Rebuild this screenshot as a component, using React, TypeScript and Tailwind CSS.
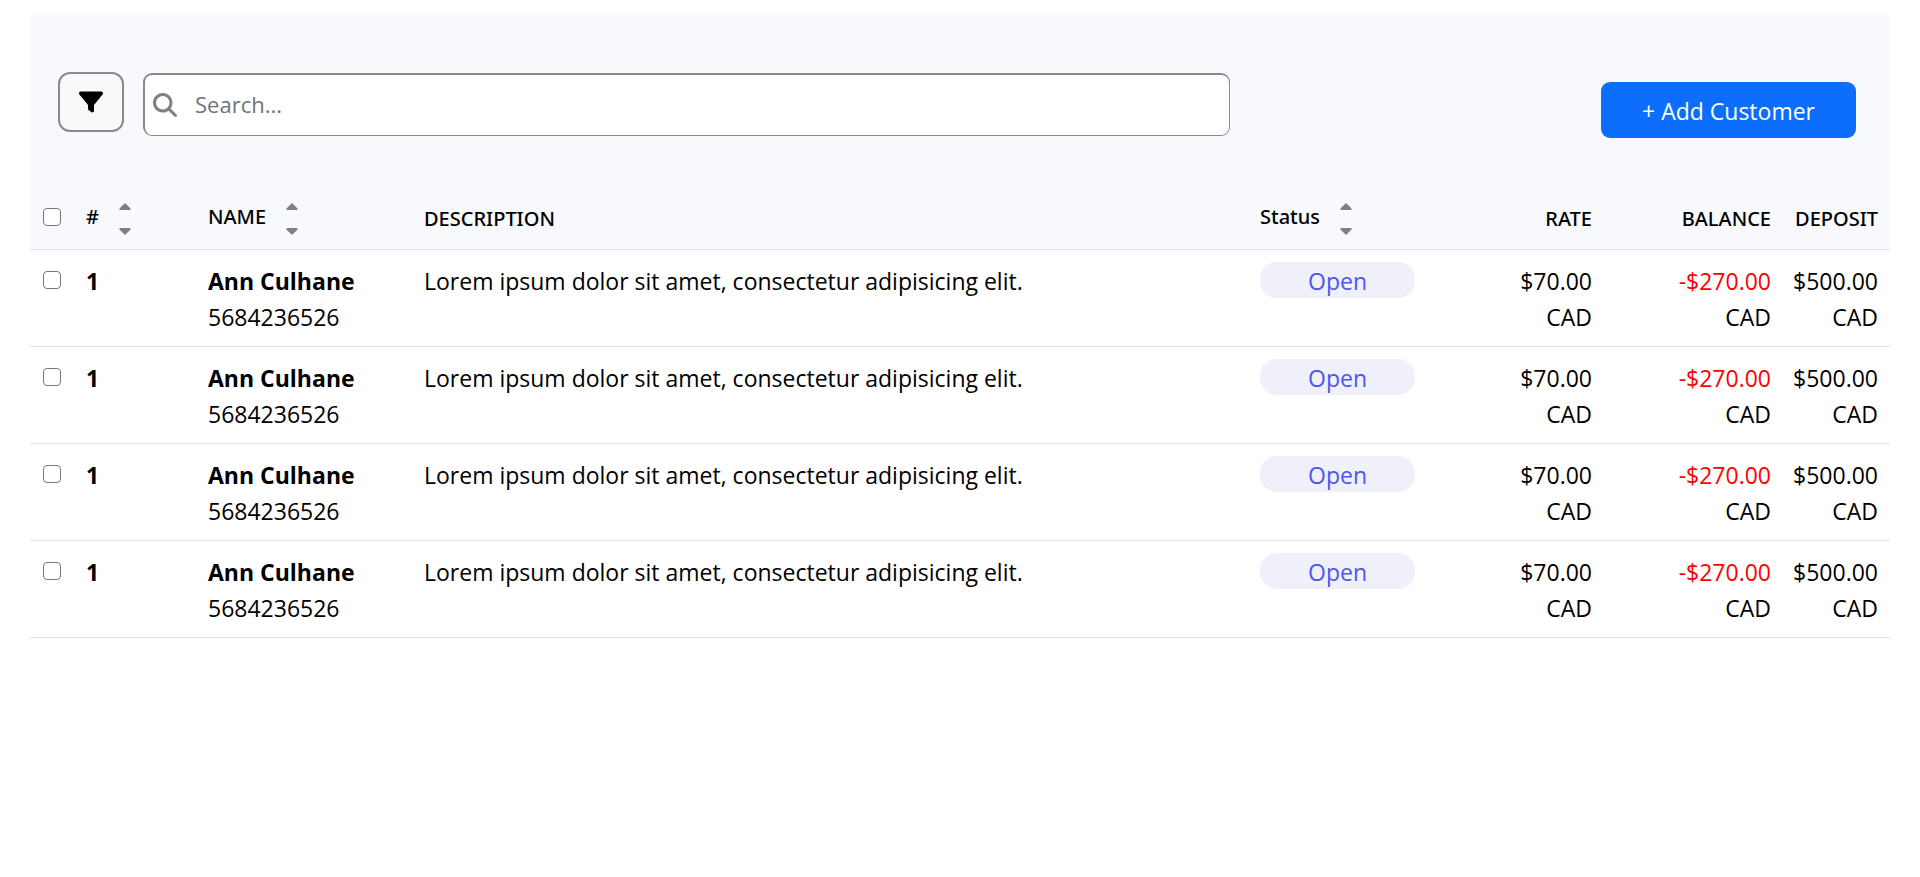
import React from "react";
import { FaFilter, FaMagnifyingGlass } from "react-icons/fa6";

interface Customer {
  id: number;
  index: number;
  name: string;
  phone: string;
  description: string;
  status: string;
  rate: string;
  balance: string;
  deposit: string;
}

const customers: Customer[] = [1, 2, 3, 4].map((id) => ({
  id,
  index: 1,
  name: "Ann Culhane",
  phone: "5684236526",
  description: "Lorem ipsum dolor sit amet, consectetur adipisicing elit.",
  status: "Open",
  rate: "$70.00",
  balance: "-$270.00",
  deposit: "$500.00",
}));

function Tick({ label }: { label: string }) {
  return (
    <input
      type="checkbox"
      aria-label={label}
      className="ml-px block size-[18px] appearance-none rounded-[4px] border border-[#767676] bg-white checked:bg-[#0d6efd]"
    />
  );
}

function SortHeading({ children }: { children: string }) {
  return (
    <div className="flex items-center gap-5">
      <span className="pb-1">{children}</span>
      <button type="button" aria-label={`Sort by ${children}`} className="flex flex-col gap-[18px]">
        <svg width="12" height="7" viewBox="0 0 12 7" fill="#808080" aria-hidden="true">
          <path d="M6 0 11.6 5.6Q12 7 10.8 7H1.2Q0 7 .4 5.6Z" />
        </svg>
        <svg width="12" height="7" viewBox="0 0 12 7" fill="#808080" aria-hidden="true">
          <path d="M6 7 11.6 1.4Q12 0 10.8 0H1.2Q0 0 .4 1.4Z" />
        </svg>
      </button>
    </div>
  );
}

function Amount({ value }: { value: string }) {
  return (
    <>
      <span className={value.startsWith("-") ? "block text-[#ff0000]" : "block"}>{value}</span>
      <span className="block">CAD</span>
    </>
  );
}

export default function App() {
  return (
    <main className="px-[30px] pt-[15px] font-['Open_Sans',sans-serif] text-[23px] leading-9 text-black">
      <div className="flex items-start bg-[#f8f9fd] pt-[57px] pr-[34px] pb-[47px] pl-7">
        <button
          type="button"
          aria-label="Filter"
          className="flex h-[60px] w-[66px] items-center justify-center rounded-[12px] border-2 border-[#8a8a8a] bg-[#f8f9fa]"
        >
          <FaFilter size={24} />
        </button>
        <label className="mt-px ml-[19px] flex h-[63px] w-[1087px] items-center gap-[18px] rounded-[9px] border border-t-2 border-l-2 border-[#8a8a8a] bg-white pl-2">
          <FaMagnifyingGlass size={24} color="#808080" />
          <input
            type="search"
            aria-label="Search"
            placeholder="Search..."
            className="min-w-0 flex-1 bg-transparent pb-0.5 text-[22px] outline-none placeholder:text-[#6c757d]"
          />
        </label>
        <button
          type="button"
          className="mt-[10px] ml-auto h-14 w-[255px] rounded-[9px] bg-[#0d6efd] pt-0.5 text-white"
        >
          + Add Customer
        </button>
      </div>
      <table className="w-full table-fixed border-collapse">
        <colgroup>
          <col className="w-[44px]" />
          <col className="w-[122px]" />
          <col className="w-[216px]" />
          <col />
          <col className="w-[179px]" />
          <col className="w-[177px]" />
          <col className="w-[179px]" />
          <col className="w-[107px]" />
        </colgroup>
        <thead className="bg-[#f8f9fd] text-left font-['Noto_Sans',sans-serif] text-[20px]">
          <tr className="h-[64px] border-b border-[#dee2e6] *:px-3 *:font-medium *:not-first:pt-1">
            <th><Tick label="Select all customers" /></th>
            <th><SortHeading>#</SortHeading></th>
            <th><SortHeading>NAME</SortHeading></th>
            <th>DESCRIPTION</th>
            <th><SortHeading>Status</SortHeading></th>
            <th className="text-right">RATE</th>
            <th className="text-right">BALANCE</th>
            <th className="text-right">DEPOSIT</th>
          </tr>
        </thead>
        <tbody>
          {customers.map((c) => (
            <tr key={c.id} className="border-b border-[#dee2e6] align-top">
              <td className="px-3 py-3">
                <div className="flex h-9 items-center">
                  <Tick label={`Select ${c.name}`} />
                </div>
              </td>
              <td className="px-3 pt-[13px] pb-[11px] font-bold">{c.index}</td>
              <td className="px-3 pt-[13px] pb-[11px] whitespace-nowrap">
                <span className="block font-bold">{c.name}</span>
                <span className="block">{c.phone}</span>
              </td>
              <td className="px-3 pt-[13px] pb-[11px]">{c.description}</td>
              <td className="px-3 py-3">
                <span className="block h-9 rounded-[17px] bg-[#f0f0fb] pt-px text-center text-[#4f55f0]">{c.status}</span>
              </td>
              <td className="px-3 pt-[13px] pb-[11px] text-right"><Amount value={c.rate} /></td>
              <td className="px-3 pt-[13px] pb-[11px] text-right"><Amount value={c.balance} /></td>
              <td className="pt-[13px] pr-3 pb-[11px] text-right"><Amount value={c.deposit} /></td>
            </tr>
          ))}
        </tbody>
      </table>
    </main>
  );
}
